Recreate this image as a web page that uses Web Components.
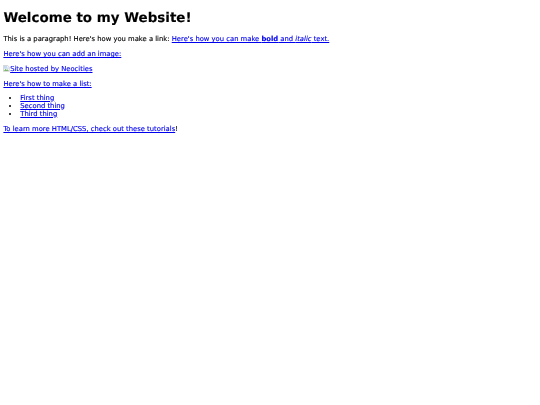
<!DOCTYPE html>
<html>
<head>
<meta charset="utf-8">
<title>My Website</title>
<style>
  html, body { margin: 0; background: #fff; }
  body { padding: 1.6px 3.375px 0; font-family: "DejaVu Sans", sans-serif; font-size: 6.8px; line-height: 8px; color: #000; text-rendering: geometricPrecision; }
</style>
</head>
<body>
<site-page></site-page>

<template id="broken-image-tpl">
  <style>
    :host { display: inline-block; width: 6.75px; height: 6.75px; vertical-align: -0.5px; }
    svg { display: block; width: 100%; height: 100%; }
  </style>
  <svg viewBox="0 0 16 16">
    <path d="M1 1h10l4 4v10H1z" fill="#fff" stroke="#b4b4b4" stroke-width="1.4"/>
    <path d="M2 2h8v4h4v3H2z" fill="#c4d8f0"/>
    <path d="M2 14l4-5 3 3 2-2 3 4z" fill="#7fb86c"/>
  </svg>
</template>

<template id="site-page-tpl">
  <style>
    :host { display: block; filter: blur(0.4px); -webkit-text-stroke: 0.14px currentColor; }
    h1 { margin: 9px 0; font-size: 13.45px; line-height: 15.7px; font-weight: bold; }
    p { margin: 6.75px 0; }
    ul { margin: -1px 0 7.75px; padding: 0 0 0 16.875px; }
    a { color: #0000ee; text-decoration: underline; }
  </style>
  <h1>Welcome to my Website!</h1>
  <p>This is a paragraph! Here's how you make a link: <a href="#">Here's how you can make <b>bold</b> and <i>italic</i> text.</a></p>
  <p><a href="#">Here's how you can add an image:</a></p>
  <p><a href="#"><broken-image></broken-image>Site hosted by Neocities</a></p>
  <p><a href="#">Here's how to make a list:</a></p>
  <ul>
    <li><a href="#">First thing</a></li>
    <li><a href="#">Second thing</a></li>
    <li><a href="#">Third thing</a></li>
  </ul>
  <p><a href="#">To learn more HTML/CSS, check out these tutorials</a>!</p>
</template>

<script>
class BrokenImage extends HTMLElement {
  constructor() {
    super();
    this._sR = this.attachShadow({ mode: "open" });
    this._sR.appendChild(document.getElementById("broken-image-tpl").content.cloneNode(true));
  }
}

class SitePage extends HTMLElement {
  constructor() {
    super();
    this._sR = this.attachShadow({ mode: "open" });
    this._sR.appendChild(document.getElementById("site-page-tpl").content.cloneNode(true));
  }
}

window.customElements.define("broken-image", BrokenImage);
window.customElements.define("site-page", SitePage);
</script>
</body>
</html>
